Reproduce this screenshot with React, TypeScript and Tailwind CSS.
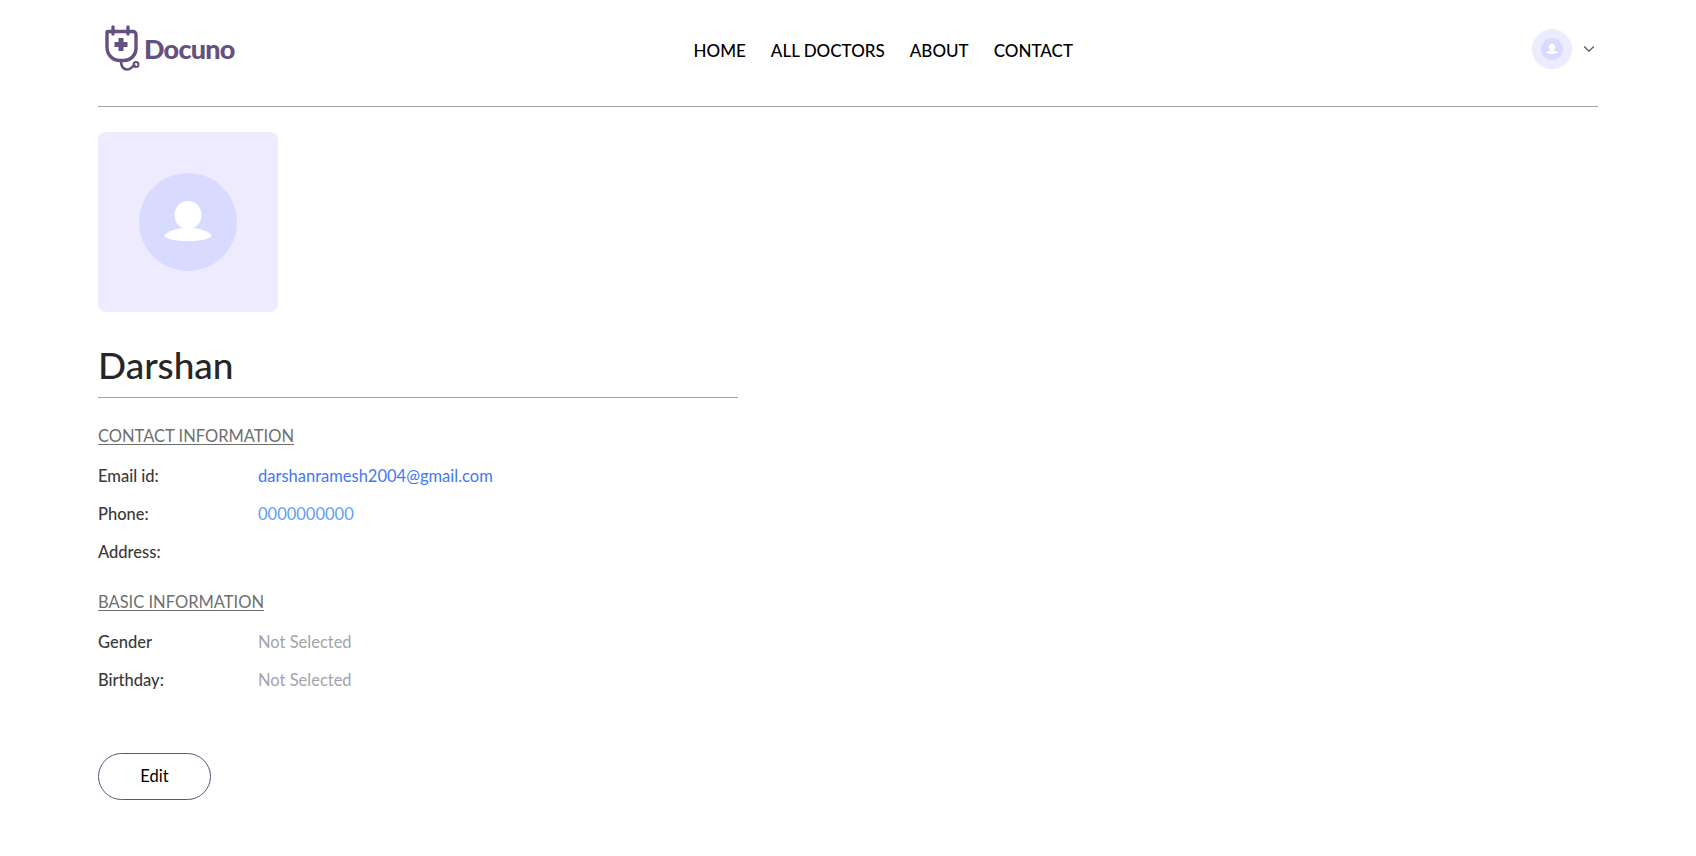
import { ChevronDown } from "lucide-react";

const font = "font-['Lato','Noto_Sans',sans-serif]";

function Logo() {
  return (
    <div className="flex items-center gap-0.5">
      <svg width="40" height="48" viewBox="0 0 40 48" fill="none" className="text-[#65507f]">
        <path
          d="M6 6.5h25a3 3 0 0 1 3 3v14a12 12 0 0 1-12 12h-4a13 13 0 0 1-13-13V7.5a1 1 0 0 1 1-1z"
          stroke="currentColor"
          strokeWidth="3.4"
        />
        <path d="M11 2v7M26 2v7" stroke="currentColor" strokeWidth="3.4" strokeLinecap="round" />
        <path d="M16.5 13h5v4h4v5h-4v4h-5v-4h-4v-5h4z" fill="currentColor" />
        <path
          d="M19 36c0 5 2 8.500 6.500 8.500 4 0 4.500-3.500 7-4"
          stroke="currentColor"
          strokeWidth="2.600"
          strokeLinecap="round"
        />
        <circle cx="34" cy="39.500" r="2.500" stroke="currentColor" strokeWidth="2" />
      </svg>
      <span className="text-[27px] leading-none font-black tracking-[-0.8px] text-[#65507f] -mt-0.5">Docuno</span>
    </div>
  );
}

function Avatar({ box, circle, glyph }: { box: string; circle: string; glyph: number }) {
  return (
    <div className={`flex items-center justify-center bg-[#eeebff] ${box}`}>
      <div className={`flex items-center justify-center rounded-full bg-[#d8dbff] ${circle}`}>
        <svg width={glyph} height={glyph} viewBox="0 0 48 48" fill="#fff">
          <path d="M24 3c7.500 0 13.500 6 13.500 14S31.500 31 24 31s-13.500-6-13.500-14S16.500 3 24 3z" />
          <path d="M0 38c3-5 12-8 24-8s21 3 24 8c-3 3-12 5-24 5S3 41 0 38z" />
        </svg>
      </div>
    </div>
  );
}

function Row({ label, value, color }: { label: string; value?: string; color?: string }) {
  return (
    <>
      <p className="font-medium text-[#3a3a3a]">{label}</p>
      <p className={color}>{value}</p>
    </>
  );
}

export default function App() {
  return (
    <div className={`mx-[98px] min-h-[856px] bg-white text-[16.500px] ${font}`}>
      <header className="flex h-[107px] items-center justify-between border-b border-[#a0a0ac]">
        <div className="pl-1 pb-2">
          <Logo />
        </div>
        <nav className="flex gap-[25px] text-[17px] font-medium text-black pb-1">
          <a>HOME</a>
          <a>ALL DOCTORS</a>
          <a>ABOUT</a>
          <a>CONTACT</a>
        </nav>
        <div className="flex items-center gap-2 pb-2">
          <Avatar box="h-10 w-10 rounded-full" circle="h-[22px] w-[22px]" glyph={12} />
          <ChevronDown size={18} strokeWidth={1.750} className="text-[#5f5f5f]" />
        </div>
      </header>

      <main className="flex max-w-[640px] flex-col pt-[25px]">
        <Avatar box="h-[180px] w-[180px] rounded-lg" circle="h-[98px] w-[98px]" glyph={48} />
        <h1 className="mt-[30px] text-[37px] leading-[46px] font-medium text-[#262626]">Darshan</h1>
        <hr className="mt-[9px] border-[#a0a0a6]" />

        <p className="mt-[26px] leading-6 text-[#6f6f6f] underline underline-offset-2">CONTACT INFORMATION</p>
        <div className="mt-[16px] grid grid-cols-[1fr_3fr] gap-y-[14px] leading-6">
          <Row label="Email id:" value="darshanramesh2004@gmail.com" color="text-[#3f79f6]" />
          <Row label="Phone:" value="0000000000" color="text-[#5f9dfb]" />
          <Row label="Address:" />
        </div>

        <p className="mt-[26px] leading-6 text-[#6f6f6f] underline underline-offset-2">BASIC INFORMATION</p>
        <div className="mt-[16px] grid grid-cols-[1fr_3fr] gap-y-[14px] leading-6">
          <Row label="Gender" value="Not Selected" color="text-[#a3a3ad]" />
          <Row label="Birthday:" value="Not Selected" color="text-[#a3a3ad]" />
        </div>

        <button className="mt-[61px] h-[47px] w-[113px] rounded-full border border-[#65507f] text-black">Edit</button>
      </main>
    </div>
  );
}
